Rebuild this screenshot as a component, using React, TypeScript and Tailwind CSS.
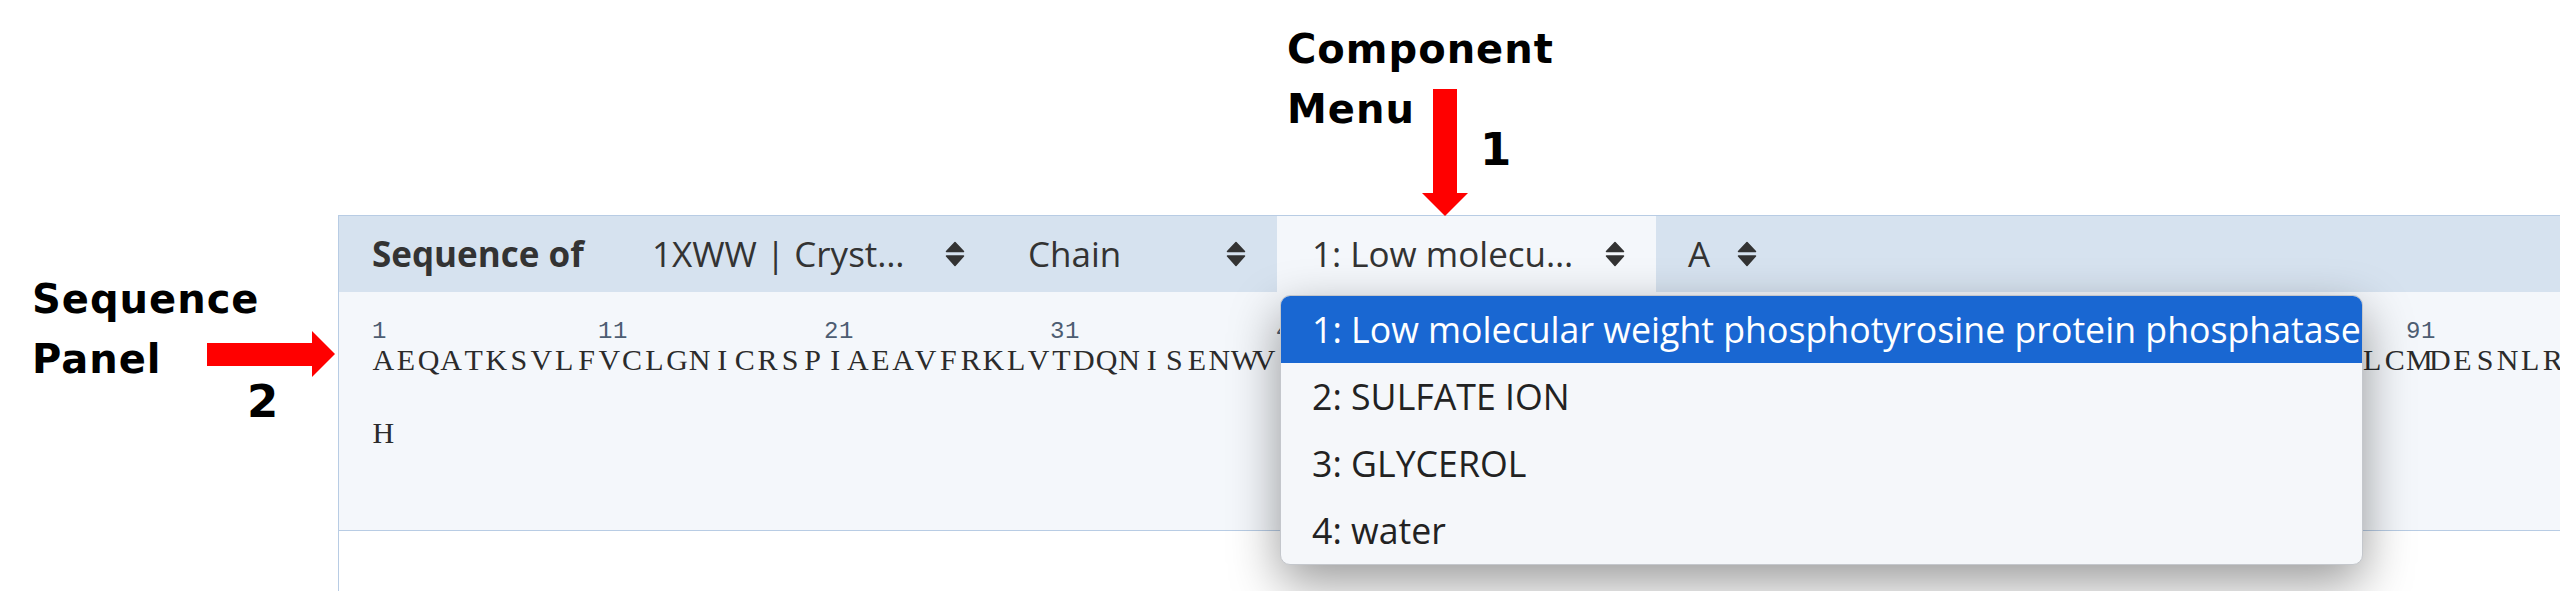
import React from "react";

const SEQ =
  "AEQATKSVLFVCLGNICRSPIAEAVFRKLVTDQNISENWVIDSGAVSDWNVGRSPDPRAVSCLRNHGIHTAHKARQITKEDFATFDYILCMDESNLRDLNRKSNQVKTCKAKIELLGSYDPQKQLIIEDPYYGNDSDFETVYQQCVRCCRAFLEKA";

function chunks(s: string) {
  const out: { label: number; text: string }[] = [];
  for (let i = 0; i < s.length; i += 10) out.push({ label: i + 1, text: s.slice(i, i + 10) });
  return out;
}

function SortIcon() {
  return (
    <svg width="20" height="26" viewBox="0 0 20 26" className="shrink-0">
      <path d="M10 1.5 L18.5 10.5 L1.5 10.5 Z" fill="#333" stroke="#333" strokeWidth="1.5" strokeLinejoin="round" />
      <path d="M1.5 15 L18.5 15 L10 24.5 Z" fill="#333" stroke="#333" strokeWidth="1.5" strokeLinejoin="round" />
    </svg>
  );
}

function Residues({ text }: { text: string }) {
  return (
    <div className="flex font-['Liberation_Serif',serif] text-[30px] leading-[36px] text-[#2b2b2b]">
      {text.split("").map((c, i) => (
        <span key={i} className="inline-block w-[22.6px] shrink-0 text-center">
          {c}
        </span>
      ))}
    </div>
  );
}

const items = [
  "1: Low molecular weight phosphotyrosine protein phosphatase",
  "2: SULFATE ION",
  "3: GLYCEROL",
  "4: water",
];

export default function App() {
  const groups = chunks(SEQ);
  return (
    <div className="relative h-[591px] w-full overflow-hidden bg-white">
      {/* Panel */}
      <div className="pl-[338px] pt-[215px]">
        <div className="w-[2400px] border-l border-t border-[#b8cce4]">
          <div className="flex h-[76px] items-stretch bg-[#d6e2ef] font-['Open_Sans',sans-serif] text-[35px] text-[#333]">
            <div className="flex w-[281px] items-center pl-[33px] font-bold">Sequence of</div>
            <div className="flex w-[376px] items-center justify-between pl-[32px] pr-[31px]">
              <span className="whitespace-nowrap">1XWW | Cryst…</span>
              <SortIcon />
            </div>
            <div className="flex w-[281px] items-center justify-between pl-[32px] pr-[31px]">
              <span>Chain</span>
              <SortIcon />
            </div>
            <div className="relative flex w-[379px] items-center justify-between bg-[#f4f7fb] pl-[35px] pr-[31px]">
              <span className="whitespace-nowrap">1: Low molecu…</span>
              <SortIcon />
              <div className="absolute left-[3px] top-[calc(100%+3px)] z-10 w-[1083px] overflow-hidden rounded-[10px] border border-[#c4c7cc] bg-[#f5f7fa] text-[35.7px] shadow-[0_18px_50px_rgba(0,0,0,0.4)]">
                {items.map((t, i) => (
                  <div
                    key={t}
                    className={
                      i === 0
                        ? "flex h-[67px] items-center whitespace-nowrap bg-[#1967d2] pl-[31px] text-white"
                        : "flex h-[67px] items-center whitespace-nowrap pl-[31px] text-[#222]"
                    }
                  >
                    {t}
                  </div>
                ))}
              </div>
            </div>
            <div className="flex items-center gap-[27px] pl-[32px] pr-[32px]">
              <span>A</span>
              <SortIcon />
            </div>
          </div>
          <div className="h-[239px] overflow-hidden border-b border-[#b8cce4] bg-[#f4f7fb] pl-[33px] pt-[30px]">
            <div className="mb-[17px] flex whitespace-nowrap">
              {groups.map((g) => (
                <div key={g.label} className="flex w-[226px] shrink-0 flex-col">
                  <div className="h-[20px] font-['Liberation_Mono',monospace] text-[24px] leading-[20px] tracking-[0.6px] text-[#4d5d72]">
                    {g.label}
                  </div>
                  <Residues text={g.text} />
                </div>
              ))}
            </div>
            <div className="flex whitespace-nowrap">
              <div className="flex shrink-0 flex-col">
                <div className="h-[20px]" />
                <Residues text="H" />
              </div>
            </div>
          </div>
          <div className="h-[80px] bg-white" />
        </div>
      </div>

      {/* Annotations */}
      <div className="absolute left-[1287px] top-[19px] font-['DejaVu_Sans',sans-serif] text-[40px] font-bold leading-[60px] tracking-[1px] text-black">
        <div>Component</div>
        <div>Menu</div>
      </div>
      <div className="absolute left-[1480px] top-[127px] font-['DejaVu_Sans',sans-serif] text-[45px] font-bold leading-[45px] text-black">
        1
      </div>
      <svg className="absolute left-[1422px] top-[89px]" width="46" height="127" viewBox="0 0 46 127">
        <rect x="11" y="0" width="24" height="104" fill="#ff0000" />
        <polygon points="0,104 46,104 23,127" fill="#ff0000" />
      </svg>

      <div className="absolute left-[32px] top-[269px] font-['DejaVu_Sans',sans-serif] text-[40px] font-bold leading-[60px] tracking-[1px] text-black">
        <div>Sequence</div>
        <div>Panel</div>
      </div>
      <div className="absolute left-[247px] top-[379px] font-['DejaVu_Sans',sans-serif] text-[45px] font-bold leading-[45px] text-black">
        2
      </div>
      <svg className="absolute left-[207px] top-[331px]" width="128" height="46" viewBox="0 0 128 46">
        <rect x="0" y="12" width="105" height="23" fill="#ff0000" />
        <polygon points="105,0 128,23 105,46" fill="#ff0000" />
      </svg>
    </div>
  );
}
